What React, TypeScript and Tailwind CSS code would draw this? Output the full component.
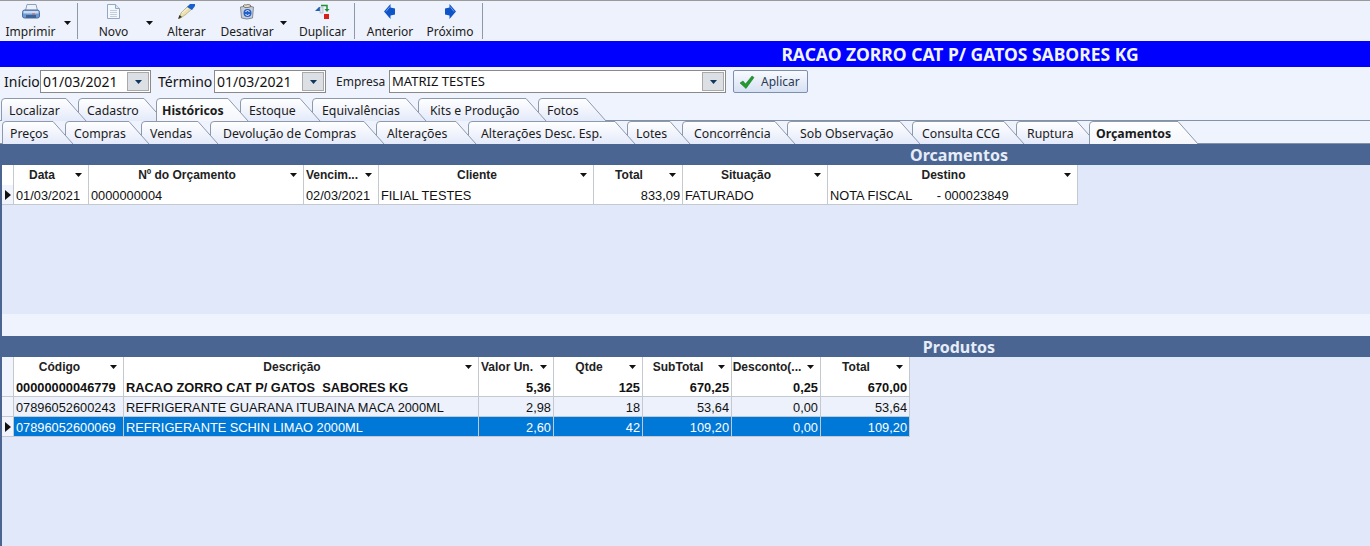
import type { ReactNode } from 'react'

const tahoma = "font-['Noto_Sans','DejaVu_Sans',sans-serif]"
const arial = "font-['Liberation_Sans',Arial,sans-serif]"

function Caret({ className = '' }: { className?: string }) {
  return (
    <svg width="7" height="4" viewBox="0 0 7 4" className={className}>
      <path d="M0 0h7L3.500 4z" fill="#111" />
    </svg>
  )
}

function PrinterIcon() {
  return (
    <svg width="18" height="16" viewBox="0 0 18 16">
      <path d="M5 0.500h9l1.500 6H3.500z" fill="#eef2f8" stroke="#8ea0b8" />
      <path d="M2.500 6h13q2 0 2 2.500v3.500q0 2-2 2h-13q-2 0-2-2V8.500q0-2.500 2-2.500z" fill="#6f9bd2" stroke="#4a6f9e" />
      <rect x="1.500" y="7" width="15" height="2.500" fill="#c9dcf3" />
      <rect x="4" y="11" width="10" height="3" fill="#3f6394" />
      <rect x="10" y="9.500" width="3" height="1" fill="#d95b4a" />
    </svg>
  )
}

function DocIcon() {
  return (
    <svg width="13" height="15" viewBox="0 0 13 15">
      <path d="M0.500.5h8l4 4v10H.500z" fill="#f4f7fb" stroke="#93a8c4" />
      <path d="M8.500.5v4h4" fill="#dde6f2" stroke="#93a8c4" />
      <path d="M3 6.500h7M3 8.500h7M3 10.500h7M3 12.500h7" stroke="#c2cddc" />
    </svg>
  )
}

function PencilIcon() {
  return (
    <svg width="17" height="15" viewBox="0 0 17 15">
      <path d="M10 2l4 3-7 6-6 4 2-6z" fill="#ece2ae" stroke="#8c8550" strokeWidth="0.5" />
      <path d="M9 3l3-3h5v2l-3 4z" fill="#1a5fd0" />
      <path d="M0 15l1.500-4 2.500 2z" fill="#35331f" />
      <path d="M4 9l6-5" stroke="#fbf7df" />
    </svg>
  )
}

function TrashIcon() {
  return (
    <svg width="16" height="16" viewBox="0 0 16 16">
      <path d="M1.500 3q6.500-2 13 0l-1 11q-5.500 2-11 0z" fill="#c7ced9" stroke="#6e7786" strokeWidth="0.8" />
      <path d="M4 2q1-2 3-1l2-.5q3 0 3 2l-3 1H6z" fill="#e5dfc8" stroke="#57534a" strokeWidth="0.7" />
      <circle cx="8.500" cy="9" r="4" fill="#2461c7" />
      <path d="M6.500 8l2-2 2 2M10.500 10l-2 2-2-2" stroke="#fff" fill="none" />
    </svg>
  )
}

function DuplicateIcon() {
  return (
    <svg width="15" height="15" viewBox="0 0 15 15">
      <path d="M0 7l4-4h1v4z" fill="#1f5fb4" />
      <rect x="5" y="3" width="3" height="6" fill="#dfe6f1" stroke="#8fa0b8" strokeWidth="0.5" />
      <path d="M6 1.500h6v4" stroke="#1f9133" strokeWidth="1.500" fill="none" />
      <path d="M9.500 5h5L12 8z" fill="#1f9133" />
      <rect x="9" y="10" width="5" height="5" fill="#d81f1a" />
    </svg>
  )
}

function ArrowIcon({ dir }: { dir: 'left' | 'right' }) {
  return (
    <svg width="12" height="15" viewBox="0 0 12 15" className={dir === 'right' ? '-scale-x-100' : ''}>
      <path d="M0 7.500L6.500 0v3.500l4.500 1v6l-4.500 1V15z" fill="#0f55c8" />
      <path d="M6 2.500L2 7.500" stroke="#6d9ce6" />
    </svg>
  )
}

function ToolButton({ icon, label, width, caret }: { icon: ReactNode; label: string; width: string; caret?: string }) {
  return (
    <div className={`relative flex flex-col items-center ${width}`}>
      <div className="flex h-[22px] items-center pb-px">{icon}</div>
      <span className="text-[12px] leading-[17px] text-[#1b1b1b]">{label}</span>
      {caret && <Caret className={`absolute top-[20px] ${caret}`} />}
    </div>
  )
}

function ToolSep() {
  return <div className="mt-[2px] h-[36px] w-px bg-[#8f98a8]" />
}

function ComboBox({ value, width, text }: { value: string; width: string; text: string }) {
  return (
    <div className={`flex h-[23px] items-center justify-between border border-[#8a8a8a] bg-white pr-px pl-[2px] ${width}`}>
      <span className={`${text} text-[#111]`}>{value}</span>
      <div className="flex h-[19px] w-[22px] items-center justify-center border border-[#a9a9a9] bg-[#dcdfe3]">
        <Caret className="[&_path]:fill-[#10385f]" />
      </div>
    </div>
  )
}

type TabItem = { label: string; x: number; tx: number; active?: boolean }

const mainTabs: TabItem[] = [
  { label: 'Localizar', x: 1, tx: 8 },
  { label: 'Cadastro', x: 78, tx: 9 },
  { label: 'Históricos', x: 156, tx: 6, active: true },
  { label: 'Estoque', x: 240, tx: 9 },
  { label: 'Equivalências', x: 312, tx: 10 },
  { label: 'Kits e Produção', x: 418, tx: 12 },
  { label: 'Fotos', x: 538, tx: 9 },
]
const subTabs: TabItem[] = [
  { label: 'Preços', x: 2, tx: 8 },
  { label: 'Compras', x: 65, tx: 9 },
  { label: 'Vendas', x: 141, tx: 9 },
  { label: 'Devolução de Compras', x: 210, tx: 13 },
  { label: 'Alterações', x: 376, tx: 11 },
  { label: 'Alterações Desc. Esp.', x: 468, tx: 13 },
  { label: 'Lotes', x: 627, tx: 9 },
  { label: 'Concorrência', x: 682, tx: 12 },
  { label: 'Sob Observação', x: 787, tx: 13 },
  { label: 'Consulta CCG', x: 912, tx: 10 },
  { label: 'Ruptura', x: 1016, tx: 11 },
  { label: 'Orçamentos', x: 1089, tx: 7, active: true },
]

function TabRow({ tabs, end, height, first }: { tabs: TabItem[]; end: number; height: number; first: number }) {
  return (
    <div className="flex border-b border-[#8492a8]" style={{ height: height + 1, paddingLeft: first }}>
      {tabs.map((tab, i) => {
        const next = i < tabs.length - 1 ? tabs[i + 1].x : end
        const w = next - tab.x
        return (
          <div key={tab.label} className="relative shrink-0" style={{ width: w, height, zIndex: tab.active ? 50 : 40 - i }}>
            <svg width={w + 9} height={height + 1} className="absolute top-0 left-0">
              <defs>
                <linearGradient id={`tab-${tab.x}`} x1="0" x2="0" y1="0" y2="1">
                  <stop offset="0" stopColor="#ffffff" />
                  <stop offset="1" stopColor={tab.active ? '#f4f6fc' : '#e4eafa'} />
                </linearGradient>
              </defs>
              <path
                d={`M0.500 ${height + 1} V4 Q0.500 0.500 4 0.500 H${w - 12} L${w + 8} ${height + 1}`}
                fill={`url(#tab-${tab.x})`}
                stroke="#8d99ad"
              />
            </svg>
            <span
              className={`absolute top-0 whitespace-nowrap text-[12.3px] leading-[25px] text-[#1b1b1b] ${tab.active ? 'font-bold' : ''}`}
              style={{ left: tab.tx }}
            >
              {tab.label}
            </span>
          </div>
        )
      })}
    </div>
  )
}

function SectionBar({ title }: { title: string }) {
  return (
    <div className={`flex h-[21px] items-center justify-center bg-[#4a6591] pl-[546px] text-[16px] font-bold text-[#e6edf8] ${tahoma}`}>
      {title}
    </div>
  )
}

function HeadCell({ title }: { title: string }) {
  return (
    <div className="relative flex h-[20px] items-center justify-center border-r border-[#c4c8cf] bg-white pr-[20px] pl-[2px] text-[12px] font-bold whitespace-nowrap text-[#222]">
      {title}
      <Caret className="absolute top-[8px] right-[6px]" />
    </div>
  )
}

function Cell({ value, right, rowCls }: { value: string; right?: boolean; rowCls: string }) {
  return (
    <div className={`flex h-[20px] items-center overflow-hidden border-r border-b border-[#c4c8cf] px-[2px] pt-[2px] text-[12.8px] whitespace-pre ${right ? 'justify-end' : ''} ${rowCls}`}>
      {value}
    </div>
  )
}

function Indicator({ on }: { on?: boolean }) {
  return (
    <div className="flex h-[20px] items-center border-r border-b border-[#c4c8cf] bg-[#f1f4fd] pl-[3px]">
      {on && (
        <svg width="6" height="10" viewBox="0 0 6 10">
          <path d="M0 0l6 5-6 5z" fill="#111" />
        </svg>
      )}
    </div>
  )
}

const budgetCols = ['Data', 'Nº do Orçamento', 'Vencim...', 'Cliente', 'Total', 'Situação', 'Destino']
const productCols = ['Código', 'Descrição', 'Valor Un.', 'Qtde', 'SubTotal', 'Desconto(...', 'Total']
const productRows = [
  { cells: ['00000000046779', 'RACAO ZORRO CAT P/ GATOS  SABORES KG', '5,36', '125', '670,25', '0,25', '670,00'], cls: 'bg-white font-bold text-[#111]' },
  { cells: ['07896052600243', 'REFRIGERANTE GUARANA ITUBAINA MACA 2000ML', '2,98', '18', '53,64', '0,00', '53,64'], cls: 'bg-[#edf1fb] text-[#111]' },
  { cells: ['07896052600069', 'REFRIGERANTE SCHIN LIMAO 2000ML', '2,60', '42', '109,20', '0,00', '109,20'], cls: 'bg-[#0078d7] text-white', on: true },
]

export default function App() {
  return (
    <div className={`flex h-[546px] w-[1370px] flex-col overflow-hidden bg-[#e0e8fa] ${arial}`}>
      <div className={`flex h-[41px] border-t border-[#9a9a9a] bg-[#edf2fc] ${tahoma}`}>
        <ToolButton icon={<PrinterIcon />} label="Imprimir" width="w-[61px]" />
        <div className="relative w-[16px]"><Caret className="absolute top-[20px] left-[3px]" /></div>
        <ToolSep />
        <ToolButton icon={<DocIcon />} label="Novo" width="w-[71px]" caret="left-[68px]" />
        <div className="w-[7px]" />
        <ToolButton icon={<PencilIcon />} label="Alterar" width="w-[61px]" />
        <ToolButton icon={<TrashIcon />} label="Desativar" width="w-[60px]" />
        <div className="relative w-[14px]"><Caret className="absolute top-[20px] left-[3px]" /></div>
        <ToolButton icon={<DuplicateIcon />} label="Duplicar" width="w-[63px]" />
        <ToolSep />
        <ToolButton icon={<ArrowIcon dir="left" />} label="Anterior" width="w-[70px]" />
        <ToolButton icon={<ArrowIcon dir="right" />} label="Próximo" width="w-[50px]" />
        <div className="w-[7px]" />
        <ToolSep />
      </div>

      <div className={`flex h-[26px] items-center justify-center bg-[#0000ff] pl-[550px] text-[17.500px] font-bold text-[#f0f4ff] ${tahoma}`}>
        RACAO ZORRO CAT P/ GATOS SABORES KG
      </div>

      <div className={`flex h-[31px] items-center bg-[#eff3fd] pb-[2px] pl-[4px] ${tahoma}`}>
        <span className="w-[36px] text-[14px] text-[#111]">Início</span>
        <ComboBox value="01/03/2021" width="w-[111px]" text="text-[14px]" />
        <span className="ml-[7px] w-[56px] text-[14px] text-[#111]">Término</span>
        <ComboBox value="01/03/2021" width="w-[112px]" text="text-[14px]" />
        <span className="ml-[10px] w-[53px] text-[12px] text-[#222]">Empresa</span>
        <ComboBox value="MATRIZ TESTES" width="w-[337px]" text="text-[13px]" />
        <button className="ml-[7px] flex h-[23px] w-[75px] items-center gap-[6px] rounded-[2px] border border-[#7b8fae] bg-gradient-to-b from-[#f8fafe] to-[#d7e1f3] pl-[5px] text-[12px] text-[#2b3a55]">
          <svg width="16" height="14" viewBox="0 0 16 14">
            <path d="M1 8l3-2 2.500 3L13 1l2 1.500L7 13.500z" fill="#1f9d2e" stroke="#126b1c" strokeWidth="0.5" />
          </svg>
          Aplicar
        </button>
      </div>

      <div className={`bg-[#eff3fd] ${tahoma}`}>
        <TabRow tabs={mainTabs} end={598} height={22} first={1} />
        <TabRow tabs={subTabs} end={1190} height={22} first={2} />
      </div>

      <div className="flex-1 border-l-2 border-[#4a6591]">
        <SectionBar title="Orcamentos" />
        <div className="h-[149px]">
          <div className="grid w-[1076px] grid-cols-[12px_75px_215px_75px_215px_89px_145px_250px]">
            <div className="h-[20px] border-r border-[#c4c8cf] bg-white" />
            {budgetCols.map((c) => <HeadCell key={c} title={c} />)}
            <Indicator on />
            {['01/03/2021', '0000000004', '02/03/2021', 'FILIAL TESTES'].map((v) => <Cell key={v} value={v} rowCls="bg-white text-[#111]" />)}
            <Cell value="833,09" right rowCls="bg-white text-[#111]" />
            <Cell value="FATURADO" rowCls="bg-white text-[#111]" />
            <Cell value="NOTA FISCAL       - 000023849" rowCls="bg-white text-[#111]" />
          </div>
        </div>
        <div className="h-[22px] bg-[#eff3fd]" />
        <SectionBar title="Produtos" />
        <div className="grid w-[908px] grid-cols-[12px_110px_355px_75px_89px_89px_89px_89px]">
          <div className="h-[20px] border-r border-[#c4c8cf] bg-[#f1f4fd]" />
          {productCols.map((c, i) => <HeadCell key={`${c}${i}`} title={c} />)}
          {productRows.map((row) => [
            <Indicator key={`i${row.cells[0]}`} on={row.on} />,
            ...row.cells.map((v, i) => <Cell key={`${row.cells[0]}${i}`} value={v} right={i > 1} rowCls={row.cls} />),
          ])}
        </div>
      </div>
    </div>
  )
}
